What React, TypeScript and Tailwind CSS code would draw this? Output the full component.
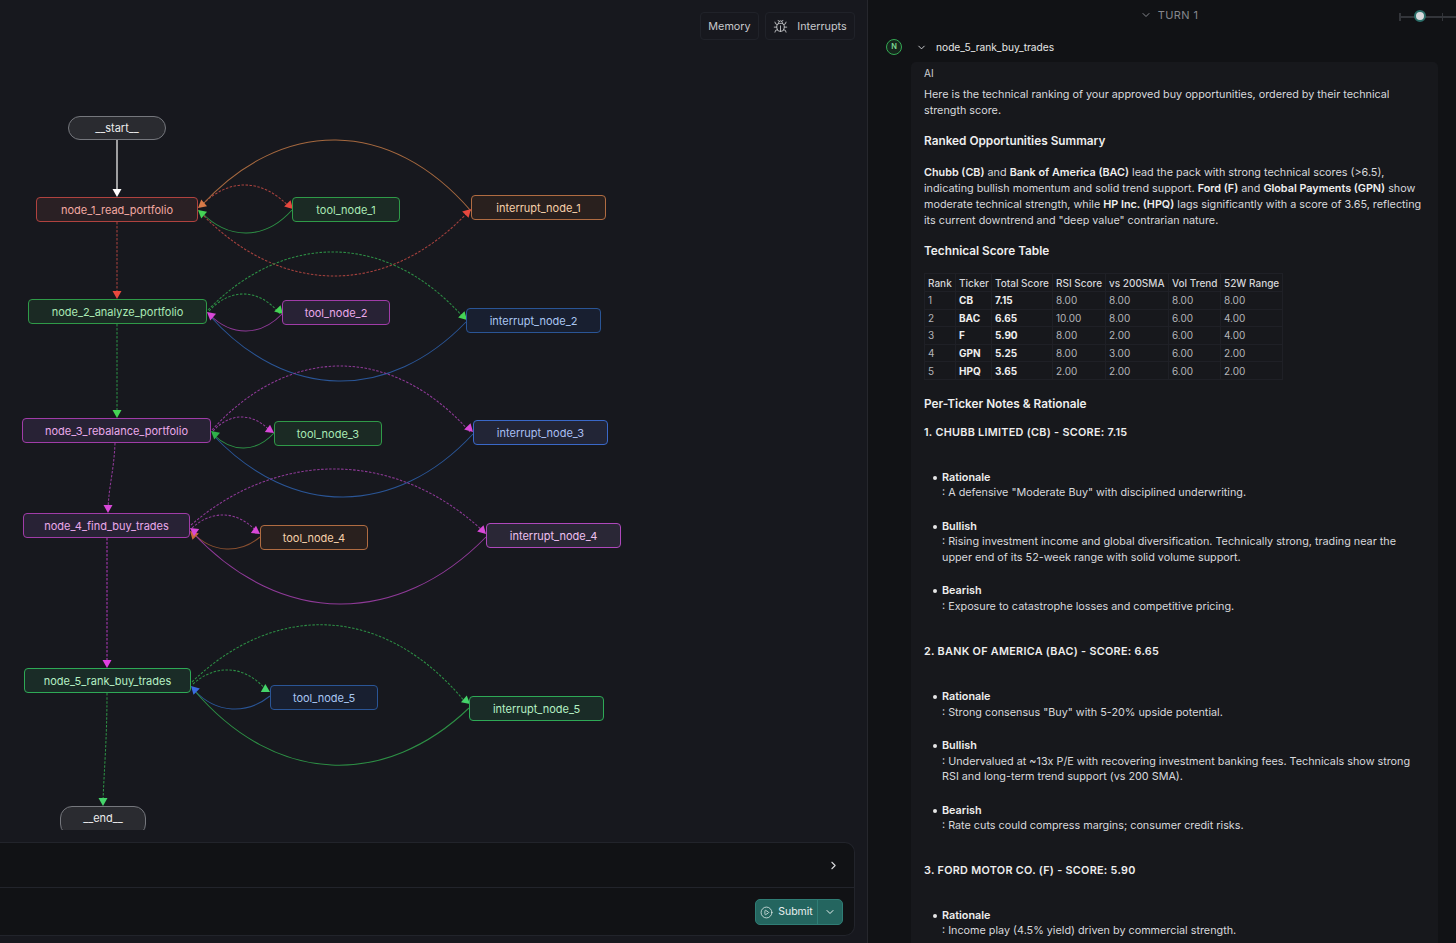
import React from "react";
import { Bug, ChevronDown, ChevronRight, CirclePlay } from "lucide-react";

// palette per node colour
const tones = {
  red: "border-[#b0423f] bg-[#2a2024] text-[#f2a9a2]",
  green: "border-[#2f9a48] bg-[#1b2a24] text-[#a9e9b4]",
  purple: "border-[#a03ca8] bg-[#282235] text-[#eaa9ea]",
  blue: "border-[#2a5596] bg-[#181f30] text-[#a9c6f2]",
  blue2: "border-[#3a68c8] bg-[#222536] text-[#a9bff2]",
  orange: "border-[#b06c42] bg-[#29201e] text-[#f6d0aa]",
  purple2: "border-[#ae48bc] bg-[#2a2736] text-[#eec0f0]",
  green2: "border-[#2ea956] bg-[#1a2c27] text-[#b5f0c4]",
  grey: "border-[#75777d] bg-[#2a2b30] text-[#ececec]",
};

type Tone = keyof typeof tones;

const nodes: { label: string; x: number; y: number; w: number; h: number; tone: Tone; pill?: boolean }[] = [
  { label: "__start__", x: 68, y: 116, w: 98, h: 24, tone: "grey", pill: true },
  { label: "node_1_read_portfolio", x: 36, y: 197, w: 162, h: 25, tone: "red" },
  { label: "tool_node_1", x: 292, y: 197, w: 108, h: 25, tone: "green" },
  { label: "interrupt_node_1", x: 471, y: 195, w: 135, h: 25, tone: "orange" },
  { label: "node_2_analyze_portfolio", x: 28, y: 299, w: 179, h: 25, tone: "green" },
  { label: "tool_node_2", x: 282, y: 300, w: 108, h: 25, tone: "purple" },
  { label: "interrupt_node_2", x: 466, y: 308, w: 135, h: 25, tone: "blue" },
  { label: "node_3_rebalance_portfolio", x: 22, y: 418, w: 189, h: 25, tone: "purple" },
  { label: "tool_node_3", x: 274, y: 421, w: 108, h: 25, tone: "green" },
  { label: "interrupt_node_3", x: 473, y: 420, w: 135, h: 25, tone: "blue2" },
  { label: "node_4_find_buy_trades", x: 23, y: 513, w: 167, h: 25, tone: "purple" },
  { label: "tool_node_4", x: 260, y: 525, w: 108, h: 25, tone: "orange" },
  { label: "interrupt_node_4", x: 486, y: 523, w: 135, h: 25, tone: "purple2" },
  { label: "node_5_rank_buy_trades", x: 24, y: 668, w: 167, h: 25, tone: "green2" },
  { label: "tool_node_5", x: 270, y: 685, w: 108, h: 25, tone: "blue" },
  { label: "interrupt_node_5", x: 469, y: 696, w: 135, h: 25, tone: "green2" },
  { label: "__end__", x: 60, y: 806, w: 86, h: 30, tone: "grey", pill: true },
];

const RED = "#a8423e";
const GREEN = "#2d8f45";
const PURPLE = "#8f3a98";
const BLUE = "#2a5596";
const ORANGE = "#a5683f";

// curved edge, apex is the y the curve reaches half way
const arc = (x1: number, y1: number, x2: number, y2: number, apex: number) => {
  const c = ((y1 + y2) / 2) + (apex - (y1 + y2) / 2) / 0.75;
  const dx = x2 - x1;
  return `M${x1} ${y1}C${x1 + dx * 0.3} ${c} ${x1 + dx * 0.7} ${c} ${x2} ${y2}`;
};

const edges: { d: string; color: string; dash?: boolean }[] = [
  { d: "M117 140V193", color: "#e8e8e8" },
  { d: "M117 222V295", color: RED, dash: true },
  { d: "M117 324V414", color: GREEN, dash: true },
  { d: "M115 443C114 470 109 485 108 509", color: PURPLE, dash: true },
  { d: "M107 538V664", color: "#b03ab8", dash: true },
  { d: "M107 693C107 740 104 770 103 802", color: GREEN, dash: true },

  { d: arc(200, 207, 290, 208, 185), color: RED, dash: true },
  { d: arc(292, 210, 201, 212, 233), color: GREEN },
  { d: arc(471, 211, 201, 206, 140), color: ORANGE },
  { d: arc(201, 213, 469, 211, 276), color: RED, dash: true },

  { d: arc(209, 311, 280, 314, 294), color: GREEN, dash: true },
  { d: arc(282, 314, 210, 315, 331), color: PURPLE },
  { d: arc(208, 310, 464, 318, 252), color: GREEN, dash: true },
  { d: arc(466, 322, 210, 316, 381), color: BLUE },

  { d: arc(213, 431, 271, 432, 417), color: PURPLE, dash: true },
  { d: arc(274, 433, 214, 435, 448), color: GREEN },
  { d: arc(212, 430, 470, 432, 366), color: PURPLE, dash: true },
  { d: arc(473, 434, 214, 436, 497), color: BLUE },

  { d: arc(192, 528, 257, 532, 515), color: PURPLE, dash: true },
  { d: arc(260, 537, 193, 533, 549), color: "#8a5030" },
  { d: arc(191, 525, 483, 531, 469), color: PURPLE, dash: true },
  { d: arc(486, 537, 193, 533, 604), color: PURPLE },

  { d: arc(193, 684, 267, 691, 670), color: GREEN, dash: true },
  { d: arc(270, 696, 194, 690, 709), color: BLUE },
  { d: arc(192, 682, 466, 703, 625), color: GREEN, dash: true },
  { d: arc(469, 708, 194, 690, 765), color: GREEN },
];

// x, y = tip of the arrow, a = direction in degrees (0 points right, 90 down)
const arrows: { x: number; y: number; a: number; c: string }[] = [
  { x: 117, y: 197, a: 90, c: "#ffffff" },
  { x: 117, y: 299, a: 90, c: "#e8483e" },
  { x: 117, y: 418, a: 90, c: "#45d455" },
  { x: 108, y: 513, a: 90, c: "#d848d8" },
  { x: 107, y: 668, a: 90, c: "#e040e0" },
  { x: 103, y: 806, a: 90, c: "#45d46a" },

  { x: 293, y: 209, a: 45, c: "#e8483e" },
  { x: 198, y: 208, a: 140, c: "#d87a48" },
  { x: 198, y: 210, a: 220, c: "#45d455" },
  { x: 471, y: 209, a: -45, c: "#e8483e" },

  { x: 283, y: 314, a: 45, c: "#45d455" },
  { x: 207, y: 312, a: 220, c: "#d848d8" },
  { x: 467, y: 320, a: 45, c: "#45d455" },

  { x: 274, y: 433, a: 35, c: "#d848d8" },
  { x: 211, y: 431, a: 220, c: "#2fb04a" },
  { x: 473, y: 432, a: 45, c: "#d848d8" },

  { x: 260, y: 534, a: 35, c: "#d848d8" },
  { x: 190, y: 531, a: 225, c: "#c8683a" },
  { x: 190, y: 528, a: 215, c: "#d848d8" },
  { x: 486, y: 534, a: 45, c: "#d848d8" },

  { x: 270, y: 692, a: 30, c: "#45d46a" },
  { x: 191, y: 686, a: 225, c: "#3a6be0" },
  { x: 470, y: 704, a: 40, c: "#45d46a" },
];

function Graph() {
  return (
    <div className="relative flex-1 overflow-hidden">
      <svg className="absolute left-0 top-0" width="868" height="778" viewBox="0 52 868 778" fill="none">
        {edges.map((e, i) => (
          <path key={i} d={e.d} stroke={e.color} strokeWidth={e.color === "#e8e8e8" ? 1.3 : 1.05} strokeDasharray={e.dash ? "2.5 1.5" : undefined} />
        ))}
        {arrows.map((a, i) => (
          <polygon key={i} points="0,0 -8,-4.5 -8,4.5" fill={a.c} transform={`translate(${a.x} ${a.y}) rotate(${a.a})`} />
        ))}
      </svg>
      {nodes.map((n) => (
        <div
          key={n.label}
          className={`absolute flex items-center justify-center border-[1.5px] text-[11px] ${tones[n.tone]} ${n.pill ? "rounded-[12px]" : "rounded-[4px]"} ${n.label === "__end__" ? "pb-[6px]" : ""}`}
          style={{ left: n.x, top: n.y - 52, width: n.w, height: n.h }}
        >
          {n.label}
        </div>
      ))}
    </div>
  );
}

const rows = [
  ["1", "CB", "7.15", "8.00", "8.00", "8.00", "8.00"],
  ["2", "BAC", "6.65", "10.00", "8.00", "6.00", "4.00"],
  ["3", "F", "5.90", "8.00", "2.00", "6.00", "4.00"],
  ["4", "GPN", "5.25", "8.00", "3.00", "6.00", "2.00"],
  ["5", "HPQ", "3.65", "2.00", "2.00", "6.00", "2.00"],
];

const head = ["Rank", "Ticker", "Total Score", "RSI Score", "vs 200SMA", "Vol Trend", "52W Range"];
const widths = ["w-[31px]", "w-[36px]", "w-[61px]", "w-[53px]", "w-[63px]", "w-[52px]", "w-[62px]"];

function ScoreTable() {
  return (
    <table className="mt-[14px] table-fixed border-collapse border border-[#1f2026] whitespace-nowrap text-[10px] leading-[12px]">
      <thead>
        <tr className="h-[18px]">
          {head.map((h, i) => (
            <th key={h} className={`border border-[#1f2026] pl-[3px] text-left font-medium text-[#d4d5d8] ${widths[i]}`}>
              {h}
            </th>
          ))}
        </tr>
      </thead>
      <tbody>
        {rows.map((r) => (
          <tr key={r[0]} className="h-[17.6px]">
            {r.map((c, i) => (
              <td key={i} className={`border border-[#1f2026] pl-[3px] ${i === 1 || i === 2 ? "font-bold text-[#eeeeee]" : "text-[#b4b5b9]"}`}>
                {c}
              </td>
            ))}
          </tr>
        ))}
      </tbody>
    </table>
  );
}

function Note({ title, text }: { title: string; text: string }) {
  return (
    <li className="mt-[18px] flex leading-[15.5px] first:mt-0">
      <span className="ml-[9px] mr-[5px] mt-[6px] h-[4px] w-[4px] shrink-0 rounded-full bg-[#e6e6e6]" />
      <div>
        <div className="font-semibold text-[#eeeeee]">{title}</div>
        <div>{text}</div>
      </div>
    </li>
  );
}

function Ticker({ title, notes, gap }: { title: string; notes: { title: string; text: string }[]; gap: string }) {
  return (
    <section className={gap}>
      <h4 className="font-semibold tracking-[0.3px] text-[#eeeeee]">{title}</h4>
      <ul className="mt-[29px]">
        {notes.map((n) => (
          <Note key={n.title} title={n.title} text={n.text} />
        ))}
      </ul>
    </section>
  );
}

export default function App() {
  return (
    <div className="flex h-[943px] w-[1456px] overflow-hidden bg-[#111215] font-['Inter',sans-serif] text-[10.8px] leading-[16px] text-[#d8d9dc]">
      {/* graph side */}
      <div className="flex w-[868px] shrink-0 flex-col border-r border-[#26272d] bg-[#17181e]">
        <div className="flex h-[52px] shrink-0 items-start justify-end gap-[6px] pr-[12px] pt-[12px]">
          <div className="flex h-[28px] w-[59px] items-center justify-center rounded-[4px] border border-[#202229] pt-[1px] text-[10.8px] text-[#c8c9cc]">Memory</div>
          <div className="flex h-[28px] w-[90px] items-center justify-center gap-[9px] rounded-[4px] border border-[#202229] pt-[1px] text-[10.8px] text-[#c8c9cc]">
            <Bug size={15} strokeWidth={1.4} />
            Interrupts
          </div>
        </div>
        <Graph />
        <div className="mb-[7px] mr-[12px] mt-[12px] flex h-[94px] shrink-0 flex-col rounded-r-[10px] border border-l-0 border-[#22242b] bg-[#111215]">
          <div className="flex h-[45px] items-center justify-end border-b border-[#22242b] pr-[14px] text-[#d8d9dc]">
            <ChevronRight size={13} />
          </div>
          <div className="flex flex-1 items-center justify-end pr-[11px]">
            <div className="flex h-[26px] w-[88px] items-center rounded-[5px] border border-[#2f7d75] bg-[#24655f] text-[#e8f0ef]">
              <div className="flex h-full w-[62px] items-center justify-center gap-[5px] border-r border-[#2f7d75] pt-[1px]">
                <CirclePlay size={13} strokeWidth={1.4} />
                <span className="text-[10.5px]">Submit</span>
              </div>
              <div className="flex flex-1 items-center justify-center">
                <ChevronDown size={12} />
              </div>
            </div>
          </div>
        </div>
      </div>

      {/* thread side */}
      <div className="flex min-w-0 flex-1 flex-col">
        <div className="relative flex h-[30px] shrink-0 items-center justify-center gap-[6px] pl-[14px] text-[#85878d]">
          <ChevronDown size={12} />
          <span className="text-[11px] tracking-[0.4px]">TURN 1</span>
          <div className="absolute left-[531px] top-[13px] h-[8px] w-[57px] border-l-2 border-[#33353a]">
            <div className="mt-[3px] h-[2px] bg-[#33353a]" />
            <div className="absolute left-[13px] top-[-3px] h-[12px] w-[12px] rounded-full border-2 border-[#2b6e69] bg-[#d8d9dc]" />
            <div className="absolute left-[41px] top-0 h-[8px] w-[1px] bg-[#33353a]" />
          </div>
        </div>
        <div className="flex h-[24px] shrink-0 items-center pl-[18px] pt-[10px]">
          <div className="flex h-[16px] w-[16px] items-center justify-center rounded-full border border-[#34a853] bg-[#16261c] text-[7.5px] font-semibold text-[#7fdc95]">N</div>
          <ChevronDown size={11} className="ml-[14px] text-[#d8d9dc]" />
          <span className="ml-[9px] text-[10.2px] text-[#e6e6e6]">node_5_rank_buy_trades</span>
        </div>
        <div className="ml-[43px] mr-[18px] mt-[8px] flex-1 rounded-t-[5px] bg-[#17181c] pl-[13px] pr-[16px] pt-[3px]">
          <div className="text-[10px] text-[#cfd0d3]">AI</div>
          <p className="mt-[6px]">
            Here is the technical ranking of your approved buy opportunities, ordered by their technical strength score.
          </p>
          <h3 className="mt-[14px] text-[11.8px] font-semibold text-[#eeeeee]">Ranked Opportunities Summary</h3>
          <p className="mt-[16px]">
            <b className="font-semibold text-[#eeeeee]">Chubb (CB)</b> and <b className="font-semibold text-[#eeeeee]">Bank of America (BAC)</b> lead the pack with strong technical scores (&gt;6.5), indicating bullish momentum and solid trend support. <b className="font-semibold text-[#eeeeee]">Ford (F)</b> and <b className="font-semibold text-[#eeeeee]">Global Payments (GPN)</b> show moderate technical strength, while <b className="font-semibold text-[#eeeeee]">HP Inc. (HPQ)</b> lags significantly with a score of 3.65, reflecting its current downtrend and "deep value" contrarian nature.
          </p>
          <h3 className="mt-[14px] text-[11.8px] font-semibold text-[#eeeeee]">Technical Score Table</h3>
          <ScoreTable />
          <h3 className="mt-[16px] text-[11.8px] font-semibold text-[#eeeeee]">Per-Ticker Notes &amp; Rationale</h3>
          <Ticker
            gap="mt-[13px]"
            title="1. CHUBB LIMITED (CB) - SCORE: 7.15"
            notes={[
              { title: "Rationale", text: ': A defensive "Moderate Buy" with disciplined underwriting.' },
              { title: "Bullish", text: ": Rising investment income and global diversification. Technically strong, trading near the upper end of its 52-week range with solid volume support." },
              { title: "Bearish", text: ": Exposure to catastrophe losses and competitive pricing." },
            ]}
          />
          <Ticker
            gap="mt-[30px]"
            title="2. BANK OF AMERICA (BAC) - SCORE: 6.65"
            notes={[
              { title: "Rationale", text: ': Strong consensus "Buy" with 5-20% upside potential.' },
              { title: "Bullish", text: ": Undervalued at ~13x P/E with recovering investment banking fees. Technicals show strong RSI and long-term trend support (vs 200 SMA)." },
              { title: "Bearish", text: ": Rate cuts could compress margins; consumer credit risks." },
            ]}
          />
          <Ticker
            gap="mt-[29px]"
            title="3. FORD MOTOR CO. (F) - SCORE: 5.90"
            notes={[{ title: "Rationale", text: ": Income play (4.5% yield) driven by commercial strength." }]}
          />
        </div>
      </div>
    </div>
  );
}
